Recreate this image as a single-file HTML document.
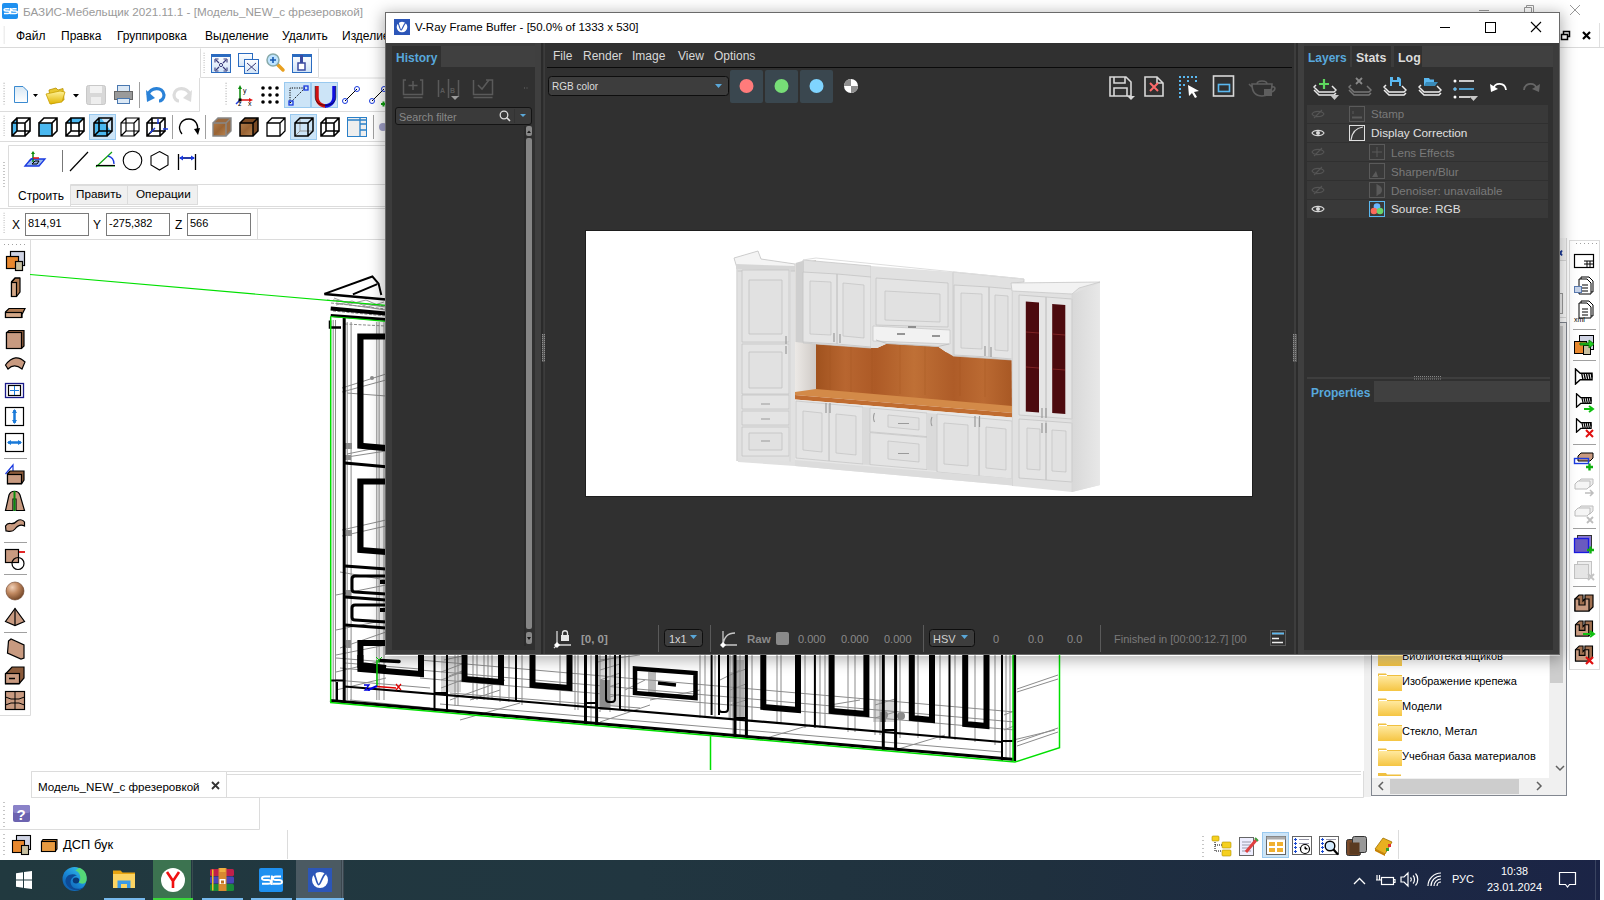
<!DOCTYPE html>
<html><head><meta charset="utf-8">
<style>
*{margin:0;padding:0;box-sizing:border-box}
html,body{width:1604px;height:900px;overflow:hidden;background:#fff;font-family:"Liberation Sans",sans-serif;font-size:12px;color:#000;position:relative}
.a{position:absolute}
.t{position:absolute;white-space:nowrap;line-height:1}
svg{position:absolute;overflow:visible}
</style></head><body>
<!-- ============ BASIS background app ============ -->
<svg width="1604" height="900" style="left:0;top:0" viewBox="0 0 1604 900">
<defs>
  <linearGradient id="gdoc" x1="0" y1="0" x2="0" y2="1"><stop offset="0" stop-color="#d8e8f4"/><stop offset="1" stop-color="#ffffff"/></linearGradient>
  <linearGradient id="gfold" x1="0" y1="0" x2="0" y2="1"><stop offset="0" stop-color="#fff39a"/><stop offset="1" stop-color="#e0b400"/></linearGradient>
  <linearGradient id="gwin" x1="0" y1="0" x2="0" y2="1"><stop offset="0" stop-color="#ffffff"/><stop offset="1" stop-color="#cfe3f7"/></linearGradient>
  <radialGradient id="gsph" cx="0.35" cy="0.3" r="0.7"><stop offset="0" stop-color="#f0d0b8"/><stop offset="0.5" stop-color="#c08860"/><stop offset="1" stop-color="#7a4c2c"/></radialGradient>
  <linearGradient id="gwood" x1="0" y1="0" x2="1" y2="1"><stop offset="0" stop-color="#b07a48"/><stop offset="0.5" stop-color="#9a6434"/><stop offset="1" stop-color="#b98450"/></linearGradient>
  <symbol id="cube" viewBox="0 0 20 20"><path d="M1 6H14V19H1Z M6 1H19V14H6Z M1 6L6 1 M14 6L19 1 M1 19L6 14 M14 19L19 14" fill="none" stroke="#000" stroke-width="1.6"/></symbol>
  <symbol id="grip" viewBox="0 0 3 30"><path d="M1 1v1M1 4v1M1 7v1M1 10v1M1 13v1M1 16v1M1 19v1M1 22v1M1 25v1" stroke="#a0a0a0" stroke-width="1.2"/></symbol>
</defs>
<!-- title icon -->
<rect x="2" y="3" width="16" height="16" rx="2" fill="#1e90f0"/>
<g transform="translate(2,3) scale(0.6667) translate(-259,-868)"><path d="M270 876.5H265Q262 876.5 262 878.2Q262 880 265 880H268Q271 880 271 882Q271 883.8 268 883.8H262 M281 876.5H276Q273 876.5 273 878.2Q273 880 276 880H279Q282 880 282 882Q282 883.8 279 883.8H273 M271.8 875.5V885" stroke="#fff" stroke-width="2.2" fill="none"/></g>
<!-- background window controls (inactive) -->
<path d="M1479 10.5H1489" stroke="#999" stroke-width="1"/>
<path d="M1524.5 7.5h7v7h-7z M1526.5 7.5v-2h7v7h-2" stroke="#999" stroke-width="1" fill="none"/>
<path d="M1570 5L1580 15M1580 5L1570 15" stroke="#999" stroke-width="1"/>
<!-- MDI child controls -->
<path d="M1558 47.5H1599.5V23" fill="#fff" stroke="#e0e0e0"/>
<path d="M1561.5 34.5h6v5h-6z M1563.5 34.5v-3h6v5h-2" stroke="#000" stroke-width="1.5" fill="none"/>
<path d="M1583 32L1590 39M1590 32L1583 39" stroke="#000" stroke-width="2.2"/>
<path d="M0 47.5H1604" stroke="#dadada"/>
<!-- menu grip -->
<use href="#grip" x="3" y="26" width="3" height="20"/>

<!-- toolbar row1 -->
<path d="M200.5 48.5V77.5H318.5V48.5" fill="none" stroke="#dcdcdc"/>
<use href="#grip" x="203" y="52" width="3" height="24"/>
<g transform="translate(211,54)"><rect x="0.5" y="0.5" width="19" height="18" fill="url(#gwin)" stroke="#2a6bc0"/><rect x="0.5" y="0.5" width="19" height="2.5" fill="#2a6bc0"/><path d="M5 6L8 9M15 6L12 9M5 16L8 13M15 16L12 13" stroke="#3a3a7a" stroke-width="1.2"/><path d="M4 5h3.5M4 5v3.5M16 5h-3.5M16 5v3.5M4 17h3.5M4 17v-3.5M16 17h-3.5M16 17v-3.5" stroke="#3a3a7a" stroke-width="1.1"/><circle cx="10" cy="11" r="1.6" fill="none" stroke="#3a3a7a"/></g>
<g transform="translate(238,53)"><rect x="0.5" y="0.5" width="14" height="13" fill="url(#gwin)" stroke="#2a6bc0"/><rect x="6.5" y="6.5" width="14" height="14" fill="url(#gwin)" stroke="#2a6bc0"/><path d="M9 10L18 18M18 10L9 18" stroke="#3a3a7a"/></g>
<g transform="translate(266,53)"><path d="M11 11L17 17" stroke="#e8a020" stroke-width="3.5" stroke-linecap="round"/><circle cx="7" cy="7" r="6" fill="#bfe4ff" stroke="#8aa" stroke-width="1.5"/><path d="M7 4v6M4 7h6" stroke="#1a5ab0" stroke-width="1.6"/></g>
<g transform="translate(292,54)"><rect x="0.5" y="0.5" width="19" height="18" fill="url(#gwin)" stroke="#2a6bc0"/><rect x="0.5" y="0.5" width="19" height="2.5" fill="#2a6bc0"/><rect x="8" y="1" width="3" height="8" fill="#3a4aa0"/><rect x="6" y="9" width="7" height="7" fill="#fff" stroke="#3a4aa0" stroke-width="1.5"/></g>

<!-- toolbar row2 left -->
<path d="M0 111.5H199.5V78" fill="none" stroke="#dcdcdc"/>
<use href="#grip" x="3" y="82" width="3" height="26"/>
<path d="M14.5 86.5H23L27.5 91V102.5H14.5Z" fill="url(#gdoc)" stroke="#3a8ad0"/>
<path d="M33 94h5l-2.5 3z M73 94h6l-3 3.5z" fill="#000"/>
<path d="M49 90L56 88L58 90L63 88.5L64 100L51 104Z" fill="#e8c830" stroke="#b89000" stroke-width="0.8"/><path d="M46 94L60 91L65 92L62 102L50 104Z" fill="url(#gfold)" stroke="#c8a000" stroke-width="0.8"/>
<rect x="86.5" y="85.5" width="19" height="19" rx="2" fill="#d8d8d8" stroke="#c8c8c8"/><rect x="90" y="86" width="12" height="7" fill="#f2f2f2"/><rect x="91" y="97" width="10" height="7" fill="#eee"/>
<rect x="117.5" y="85.5" width="12" height="6" fill="#dbe8f5" stroke="#4a78b0"/><rect x="114.5" y="91.5" width="18" height="8" fill="#9a9a9a" stroke="#666"/><rect x="117.5" y="98.5" width="12" height="5" fill="#dbe8f5" stroke="#4a78b0"/>
<path d="M139.5 82V108" stroke="#a0a0a0"/>
<path d="M148 95 C150 87 163 86 164 95 C164 99 161 101 159 101" fill="none" stroke="#2a82d8" stroke-width="3.2"/><path d="M146 90L147 102L155 98Z" fill="#2a82d8"/>
<path d="M190 95 C188 87 175 86 174 95 C174 99 177 101 179 101" fill="none" stroke="#dcdcdc" stroke-width="3.2"/><path d="M192 90L191 102L183 98Z" fill="#dcdcdc"/>

<!-- toolbar row2 right -->
<path d="M222 111.5H386 M318.5 78H386" fill="none" stroke="#dcdcdc"/>
<use href="#grip" x="225" y="82" width="3" height="26"/>
<g transform="translate(235,85)"><path d="M5 15V2M5 15H16M5 15L1 19" stroke="#000" stroke-width="0"/><path d="M5 15V3" stroke="#0a8a0a" stroke-width="1.5"/><path d="M3 4L5 0L7 4Z" fill="#0a8a0a"/><path d="M5 15H15" stroke="#e01010" stroke-width="1.5"/><path d="M14 13L18 15L14 17Z" fill="#e01010"/><path d="M5 15L1 19" stroke="#1a3ae0" stroke-width="1.5"/><rect x="3.5" y="13.5" width="3" height="3" fill="#000"/><text x="8" y="8" font-size="7" font-family="Liberation Sans">y</text><text x="13" y="21" font-size="7" font-family="Liberation Sans">x</text><text x="3" y="21" font-size="7" font-family="Liberation Sans">z</text></g>
<g fill="#000"><circle cx="263" cy="88" r="1.8"/><circle cx="270" cy="88" r="1.8"/><circle cx="277" cy="88" r="1.8"/><circle cx="263" cy="95" r="1.8"/><circle cx="270" cy="95" r="1.8"/><circle cx="277" cy="95" r="1.8"/><circle cx="263" cy="102" r="1.8"/><circle cx="270" cy="102" r="1.8"/><circle cx="277" cy="102" r="1.8"/></g>
<rect x="284.5" y="82.5" width="26" height="25" fill="#cce4f7" stroke="#99c9ef"/>
<rect x="311.5" y="82.5" width="26" height="25" fill="#cce4f7" stroke="#99c9ef"/>
<path d="M290 103V88H305 M290 103L305 88" stroke="#000" stroke-width="1" stroke-dasharray="1.2 1.2" fill="none"/><rect x="289" y="101" width="4" height="4" fill="none" stroke="#1a3ae0" stroke-width="1.3"/><rect x="304" y="86" width="4" height="4" fill="none" stroke="#1a3ae0" stroke-width="1.3"/>
<path d="M317 86V97 C317 106 326 106 326 106" stroke="#d01010" stroke-width="3.5" fill="none"/><path d="M334 86V97 C334 106 325 106 325 106" stroke="#1010e0" stroke-width="3.5" fill="none"/><path d="M315.2 86V97 C315.2 108 335.8 108 335.8 97V86" stroke="#000" stroke-width="0.6" fill="none"/>
<path d="M345 101L357 89" stroke="#000"/><circle cx="345" cy="101" r="2.5" fill="none" stroke="#1a3ae0"/><circle cx="357" cy="89" r="2.5" fill="none" stroke="#1a3ae0"/>
<path d="M372 101L384 89" stroke="#000"/><circle cx="372" cy="101" r="2.5" fill="none" stroke="#1a3ae0"/><circle cx="384" cy="89" r="2.5" fill="none" stroke="#1a3ae0"/><path d="M381 104h5M383.5 101.5v5" stroke="#10a010" stroke-width="2"/>

<!-- toolbar row3 -->
<path d="M0 141.5H386" stroke="#dcdcdc"/>
<use href="#grip" x="3" y="115" width="3" height="24"/>
<g transform="translate(11,117)"><path d="M1 6L6 1V14L1 19Z" fill="#4ab8f0"/><use href="#cube" width="20" height="20"/></g>
<g transform="translate(38,117)"><path d="M1 6L6 1H19V14L14 19 M14 6L19 1" fill="#fff" stroke="#000" stroke-width="1.6"/><path d="M1 6H14V19H1Z" fill="#4ab8f0" stroke="#000" stroke-width="1.6"/></g>
<g transform="translate(65,117)"><path d="M1 6L6 1H19L14 6Z" fill="#4ab8f0"/><use href="#cube" width="20" height="20"/></g>
<rect x="89.5" y="114.5" width="26" height="25" fill="#cce4f7" stroke="#99c9ef"/>
<g transform="translate(93,117)"><path d="M2 6L8 1L18 14L14 19H2Z" fill="#4ab8f0"/><use href="#cube" width="20" height="20"/></g>
<g transform="translate(120,117)"><path d="M1 6H14V19H1Z M6 1H19V14H6Z M1 6L6 1 M14 6L19 1 M1 19L6 14 M14 19L19 14" fill="none" stroke="#000" stroke-width="1.2"/></g>
<g transform="translate(146,117)"><use href="#cube" width="20" height="20"/><path d="M4 16L9 11" stroke="#1a3ae0" stroke-width="1.5"/><path d="M12 2V7M17 12H22" stroke="#1a3ae0" stroke-width="1.5"/></g>
<path d="M172.5 115V139 M205.5 115V139 M373.5 115V139" stroke="#a0a0a0"/>
<path d="M182 134 C177 128 180 119 189 119 C196 119 199 126 197 131" fill="none" stroke="#000" stroke-width="1.3"/><path d="M194 129L198 135L200 128Z" fill="#000"/>
<g transform="translate(212,117)"><path d="M1 6H14V19H1Z" fill="url(#gwood)"/><path d="M1 6L6 1H19L14 6Z M14 6L19 1V14L14 19Z" fill="#9a6a40"/><path d="M1 6H14V19H1Z M1 6L6 1H19V14L14 19 M14 6L19 1" fill="none" stroke="#888" stroke-width="1.4"/></g>
<g transform="translate(239,117)"><path d="M1 6H14V19H1Z" fill="url(#gwood)"/><path d="M1 6L6 1H19L14 6Z M14 6L19 1V14L14 19Z" fill="#7a4a24"/><path d="M1 6H14V19H1Z M1 6L6 1H19V14L14 19 M14 6L19 1" fill="none" stroke="#000" stroke-width="1.5"/></g>
<g transform="translate(266,117)"><path d="M1 6H14V19H1Z M1 6L6 1H19V14L14 19 M14 6L19 1" fill="#fff" stroke="#000" stroke-width="1.3"/></g>
<rect x="290.5" y="114.5" width="26" height="25" fill="#cce4f7" stroke="#99c9ef"/>
<g transform="translate(294,117)"><path d="M6 1V14H19 M6 14L1 19" stroke="#999" fill="none"/><path d="M1 6H14V19H1Z M1 6L6 1H19V14L14 19 M14 6L19 1" fill="none" stroke="#000" stroke-width="1.5"/></g>
<g transform="translate(320,117)"><use href="#cube" width="20" height="20"/></g>
<g transform="translate(347,117)"><rect x="0.5" y="0.5" width="19" height="19" fill="#eee" stroke="#2a80c8"/><path d="M13 1V19 M13 7H19 M13 13H19 M1 3H19" stroke="#2a80c8" stroke-width="1.3"/></g>
<circle cx="383" cy="127" r="4" fill="#a0a0c8"/>

<!-- build panel -->
<path d="M8.5 207V145.5H386" fill="none" stroke="#dcdcdc"/>
<use href="#grip" x="3" y="146" width="3" height="60"/>
<g transform="translate(25,151)"><path d="M0 15L6 8H20L14 15Z" fill="#9ab8f0" stroke="#1a3ae0" stroke-width="1.3"/><path d="M7 13L10 10H14L12 13Z" stroke="#000" fill="none"/><path d="M8 11V2" stroke="#0a8a0a" stroke-width="1.5"/><path d="M6 3L8 0L10 3Z" fill="#0a8a0a"/><path d="M8 7H14" stroke="#e01010" stroke-width="1.5"/><path d="M8 7L4 10" stroke="#1a3ae0" stroke-width="1.5"/></g>
<path d="M62.5 150V172" stroke="#777"/>
<path d="M70 171L88 152" stroke="#000" stroke-width="1.2"/>
<path d="M96 166H115 M96 167L112 152" stroke="#10a010" stroke-width="1.2"/><path d="M96 165.5H115" stroke="#000" stroke-width="1.2"/><path d="M108 156 C112 157 114 160 114 164" stroke="#1a3ae0" fill="none" stroke-width="1.3"/>
<circle cx="132.5" cy="160.5" r="9.3" fill="none" stroke="#000" stroke-width="1.1"/>
<path d="M159.5 151.5L168 156V165L159.5 170L151 165V156Z" fill="none" stroke="#000" stroke-width="1.1"/>
<path d="M178.5 154V170M195.5 154V170M180 158H194" stroke="#000" stroke-width="1.3"/><path d="M180 158H194" stroke="#1a3ae0" stroke-width="1.3"/><path d="M179 158L183 155.5V160.5Z M195 158L191 155.5V160.5Z" fill="#1a3ae0"/>
<!-- tabs -->
<path d="M70.5 206V184.5H386" fill="none" stroke="#dcdcdc"/>
<rect x="70.5" y="185.5" width="57" height="19" fill="#f0f0f0" stroke="#dcdcdc"/>
<rect x="127.5" y="185.5" width="70" height="19" fill="#f0f0f0" stroke="#dcdcdc"/>
<path d="M8 206.5H70 M70 206.5H386" stroke="#dcdcdc"/>

<!-- coordinates -->
<path d="M0 208.5H386 M0 239.5H386 M257.5 208V239" stroke="#dcdcdc"/>
<use href="#grip" x="3" y="212" width="3" height="24"/>
<rect x="25.5" y="213.5" width="63" height="22" fill="#fff" stroke="#7a7a7a"/>
<rect x="106.5" y="213.5" width="63" height="22" fill="#fff" stroke="#7a7a7a"/>
<rect x="187.5" y="213.5" width="63" height="22" fill="#fff" stroke="#7a7a7a"/>

<!-- left vertical toolbar -->
<path d="M30.5 240V715.5H0" fill="none" stroke="#dcdcdc"/>
<path d="M4 244.5h1M8 244.5h1M12 244.5h1M16 244.5h1M20 244.5h1M24 244.5h1" stroke="#a0a0a0" stroke-width="1.2"/>
<g stroke="#000" stroke-width="1.2">
 <rect x="10.5" y="251.5" width="14" height="14" fill="#d0d4e4"/>
 <rect x="6.5" y="256.5" width="12" height="12" fill="#e8882e"/>
 <rect x="15.5" y="261.5" width="7" height="9" fill="#c8c0a0"/>
 <path d="M11.5 282L15 278H20V292L16.5 296.5H11.5Z" fill="#b07a52"/><rect x="11.5" y="282.5" width="5" height="14" fill="#d4a888"/><path d="M11.5 282L15 278H20" fill="none"/>
 <path d="M5.5 312L9 308.5H25L22 314.5V317.5H5.5Z" fill="#b07a52"/><rect x="5.5" y="312.5" width="16" height="5" fill="#d4a888"/>
 <path d="M6.5 333L9 330.5H24V346L21.5 348.5H6.5Z" fill="#8a5a3a"/><rect x="6.5" y="332.5" width="15" height="16" fill="#c89a80"/>
 <path d="M5.5 365 C12 356 19 356 25 362 L22 369 C17 365 12 365 8 369Z" fill="#c89a80"/>
 <rect x="5.5" y="383.5" width="18" height="14" fill="#fff" stroke="#1a1a8a" stroke-width="1.3"/><rect x="8.5" y="385.5" width="12" height="10" fill="#fff"/>
 <rect x="5.5" y="407.5" width="18" height="18" fill="#fff"/>
 <rect x="5.5" y="433.5" width="18" height="18" fill="#fff"/>
</g>
<path d="M10 390.5H19M14.5 386V395" stroke="#1a7ad8" stroke-width="1"/>
<path d="M14.5 410V423" stroke="#1a7ad8" stroke-width="2.5"/><path d="M12 413L14.5 409L17 413ZM12 420L14.5 424L17 420Z" fill="#1a7ad8"/>
<path d="M8 442.5H21" stroke="#1a7ad8" stroke-width="2.5"/><path d="M11 440L7 442.5L11 445ZM18 440L22 442.5L18 445Z" fill="#1a7ad8"/>
<path d="M4 458.5H27M4 542.5H27M4 574.5H27M4 632.5H27" stroke="#a0a0a0"/>
<g stroke="#000" stroke-width="1.2">
 <path d="M5.5 474L13 465V480" fill="none" stroke="#1a3ae0"/>
 <path d="M7.5 474L10 471H24V480L21.5 484H7.5Z" fill="#8a5a3a"/><rect x="7.5" y="474.5" width="14" height="9" fill="#c89a80"/>
 <path d="M5.5 510.5L9 495 C11 490 18 490 20 495 L24.5 510.5H16V499H13V510.5Z" fill="#c89a80"/>
 <path d="M5.5 526 C9 520 12 527 17 521 C20 519 23 520 24.5 522V526 C21 524 18 525 15 529 C12 533 8 531 6 531Z" fill="#c89a80"/>
 <rect x="5.5" y="549.5" width="13" height="13" fill="#c89a80"/>
 <circle cx="18" cy="563.5" r="6" fill="none"/>
</g>
<path d="M14.5 491V511" stroke="#0a8a0a" stroke-width="2"/>
<path d="M19 552h6" stroke="#e01010" stroke-width="1.8"/>
<circle cx="15" cy="591" r="9" fill="url(#gsph)" stroke="#6a4028" stroke-width="0.6"/>
<g stroke="#000" stroke-width="1.2">
 <path d="M15 608.5L5.5 621.5L15 625.5L24.5 621.5Z" fill="#c89a80"/><path d="M15 608.5V625.5" fill="none"/>
 <path d="M8.5 641L11 639L24 645V658L21 659L7.5 653Z" fill="#c89a80"/>
 <path d="M5.5 674L12 667H24V678L19 684H5.5Z" fill="#8a5a3a"/><rect x="5.5" y="673.5" width="14" height="10" fill="#c89a80"/><path d="M9 678.5H15" stroke-width="1.5"/>
 <rect x="5.5" y="691.5" width="19" height="18" fill="#c89a80"/><path d="M15 691.5V709.5M5.5 697L11 699H19L24.5 697M5.5 705L11 703H19L24.5 705" fill="none" stroke-width="1"/>
</g>
</svg>
<div class="t" style="left:23px;top:6px;font-size:11.7px;color:#9a9a9a">БАЗИС-Мебельщик 2021.11.1 - [Модель_NEW_с фрезеровкой]</div>
<div class="t" style="left:16px;top:30px;font-size:12px">Файл</div>
<div class="t" style="left:61px;top:30px;font-size:12px">Правка</div>
<div class="t" style="left:117px;top:30px;font-size:12px">Группировка</div>
<div class="t" style="left:205px;top:30px;font-size:12px">Выделение</div>
<div class="t" style="left:282px;top:30px;font-size:12px">Удалить</div>
<div class="t" style="left:342px;top:30px;font-size:12px">Изделие</div>
<div class="t" style="left:18px;top:190px;font-size:12px">Строить</div>
<div class="t" style="left:76px;top:188px;font-size:11.7px">Править</div>
<div class="t" style="left:136px;top:188px;font-size:11.7px">Операции</div>
<div class="t" style="left:12px;top:219px;font-size:12px">X</div>
<div class="t" style="left:93px;top:219px;font-size:12px">Y</div>
<div class="t" style="left:175px;top:219px;font-size:12px">Z</div>
<div class="t" style="left:28px;top:218px;font-size:11px">814,91</div>
<div class="t" style="left:109px;top:218px;font-size:11px">-275,382</div>
<div class="t" style="left:190px;top:218px;font-size:11px">566</div>

<svg width="1604" height="900" style="left:0;top:0" viewBox="0 0 1604 900">
<g fill="none" stroke-linecap="butt">
<!-- gray construction lines (left column) -->
<g stroke="#8c8c8c" stroke-width="1">
 <path d="M333.2 320V702 M335.5 320V702 M347.2 322V700 M351.1 322V700 M376.8 322V700 M379.1 322V700 M384 322V700"/>
 <path d="M333 300L386 307 M336 303L386 310 M342 388L386 374 M342 392L386 380 M347 393L386 396 M347 454L386 446 M347 457L386 451 M342 530L386 520 M342 536L386 526 M336 595L386 585 M340 572L386 580 M336 630L386 620 M340 648L386 632 M336 655L386 645 M336 672L386 660 M336 690L386 678"/>
 <path d="M327 300L386 306 M331 303L386 309 M333 311L386 316 M345 324L386 326" stroke-dasharray="3 1.5"/><path d="M334 298L350 304L366 300L380 306 M336 305L352 301L368 307L384 302" stroke="#9a9a9a"/>
</g>
<g fill="#8c8c8c"><rect x="345" y="443" width="7" height="6"/><rect x="345" y="455" width="6" height="5"/><rect x="346" y="530" width="6" height="6"/><rect x="346" y="590" width="5" height="6"/><rect x="346" y="640" width="5" height="8"/><circle cx="372" cy="378" r="2"/></g>
<!-- gray construction lines (lower strip) -->
<g stroke="#8c8c8c" stroke-width="1">
 <path d="M336 658L386 662 M420 660L1015 712 M420 670L1015 722 M420 678L1015 730 M440 704L1002 752 M345 663L420 669"/>
 <path d="M340 668L420 675 M336 680L430 688 M350 700L430 708"/>
 <path d="M455 655V706 M458 655V706 M473 655V700 M477 655V700 M484 655V700 M488 655V700 M492 655V700 M500 655V702 M509 655V702 M522 655V705 M560 655V705 M575 655V710 M578 655V710 M591 655V725 M600 655V712 M610 655V712 M625 655V712 M629 655V712 M700 655V718 M705 655V718 M715 655V718 M730 655V720 M733 655V736 M740 655V736 M752 655V722 M777 655V724 M781 655V724 M805 655V728 M820 655V728 M825 655V728 M848 655V732 M855 655V732 M875 655V735 M880 655V735 M900 655V738 M918 655V738 M940 655V740 M955 655V740 M975 655V742 M995 655V745 M1006 655V760 M1010 655V760"/>
 <path d="M460 720L520 703 M600 722L650 705 M650 700L700 690 M760 740L810 725 M895 750L945 735 M1005 742L1055 730"/>
 <path d="M1017 689L1058 675 M1017 692L1058 679 M1017 742L1058 728 M1017 746L1058 732"/>
 <path d="M600 660L640 655 M625 690L645 680 M720 680L740 670 M830 705L860 700"/>
</g>
<g fill="#8c8c8c"><rect x="600" y="680" width="10" height="30"/><rect x="648" y="672" width="8" height="22" opacity="0.6"/><rect x="880" y="712" width="6" height="10"/><circle cx="884" cy="715" r="4"/><circle cx="901" cy="716" r="4"/><rect x="736" y="660" width="8" height="60" opacity="0.5"/><rect x="727" y="672" width="6" height="30" opacity="0.5"/></g>
<g stroke="#8c8c8c" stroke-width="1" fill="none">
 <path d="M441 672L462 664 M441 680L462 672 M441 688L462 680 M449 676L462 671 M444 660L462 656 M450 700L505 680 M470 700L500 690 M600 670L620 664 M600 680L620 673 M600 690L620 683 M600 700L620 694 M598 662L620 656 M450 693L584 703.6 M600 705L640 708 M730 705L746 700 M730 690L746 684 M730 675L746 669 M875 705L895 699 M875 718L895 712 M1004 730L1014 726 M1004 715L1014 711"/>
</g>
<g fill="#8c8c8c" opacity="0.35"><rect x="441" y="656" width="20" height="36"/><rect x="598" y="656" width="22" height="50"/><rect x="728" y="656" width="18" height="62"/><rect x="873" y="700" width="22" height="22"/></g>
<!-- black outlines -->
<g stroke="#000">
 <path d="M324.4 293.9L372.4 276.5L378.6 283.6L381.3 295 M352.9 294.3L377.3 284.1" stroke-width="2"/>
 <path d="M324.4 293.9L386 299.5" stroke-width="2.5"/>
 <path d="M330.7 308.5L386 313.4" stroke-width="4"/>
 <path d="M330.7 315.6L386 319.4" stroke-width="3"/>
 <path d="M330 320.5V327.5H341" stroke-width="2.5"/>
 <path d="M344.2 318V702" stroke-width="3"/>
 <path d="M386 336.5H360.4V445.8L386 448.2" stroke-width="6.2"/>
 <path d="M386 481.5H360.4V550L386 552" stroke-width="6.2"/>
 <path d="M345 463L386 466.7" stroke-width="3"/>
 <path d="M345 566L386 569 M345 597L386 600 M345 625L386 628" stroke-width="3"/>
 <path d="M386 576H355Q352 576 352 579V589Q352 592 355 592L386 594 M386 605H355Q352 605 352 608V617Q352 620 355 620L386 622" stroke-width="3"/><path d="M380 582h6M380 610h6" stroke-width="4"/>
 <path d="M386 643H360.4V665L386 668" stroke-width="6"/>
 <path d="M331 680.5H344 M337 682V702" stroke-width="2"/>
 <!-- lower strip -->
 <path d="M330 700.5L1015 759.5" stroke-width="3"/>
 <path d="M345 686.5L1002 742" stroke-width="2.2"/>
 <path d="M421 655V674L360.4 669V655" stroke-width="6"/>
 <path d="M380 660.5L399 661.5" stroke-width="3.5" stroke-linecap="round"/>
 <path d="M434.5 655V710 M447 655V712 M516 655V700 M620 655V710 M711.6 655V715 M719 655V715 M814.9 655V727.4 M949.5 655V737.5 M1002 655V761" stroke-width="2"/>
 <path d="M585.5 655V725 M596.6 655V725 M735 655V736.4 M746.4 655V736.4 M883.3 655V750 M895.6 655V750 M1014.6 655V761" stroke-width="3"/>
 <path d="M434.5 693H447 M585.5 703H596.6 M735 718H746.4 M883.3 730H895.6 M1002 741H1015" stroke-width="2"/>
 <path d="M464.5 655V679L501 682V655 M532.5 655V685L569.5 688V655 M763.3 655V707L798 710V655 M831.6 655V711L866.4 714V655 M911.8 655V718L932 720V655 M965.2 655V724L986.5 726V655" stroke-width="6"/>
 <path d="M606 655V699Q606 702 609 702H612Q615 702 615 699V655 M719 655V709Q719 712 722 712H725Q728 712 728 709V655" stroke-width="2"/>
 <path d="M635 668.5L695.5 673V698L635 693Z" stroke-width="4.5"/>
 <path d="M658 683L676 685" stroke-width="3.5"/>
</g>
<!-- green -->
<g stroke="#00e000" stroke-width="1.5">
 <path d="M330.7 316.5V702 M330 702.5L1015 762L1059.5 747.6V655 M710.5 736V770 M1013 655V761"/>
 <path d="M30 274.5L386 305.4 M330.7 316.5L386 321.4" stroke-width="1.1"/>
</g>
<!-- axis icon -->
<path d="M377 660V687" stroke="#00c800" stroke-width="1.5"/>
<path d="M377 686.5L396 688" stroke="#e00000" stroke-width="1.5"/>
<path d="M377 686L368 690" stroke="#0000e0" stroke-width="2"/>
<path d="M396 684L401 690M401 684L396 690" stroke="#e00000" stroke-width="1.2"/>
<path d="M364 685H369L365 690H370" stroke="#0000e0" stroke-width="1.3"/>
<path d="M376 657L379 660L382 657M379 660V663" stroke="#00c800" stroke-width="1"/>
</g>
</svg>

<svg width="1604" height="900" style="left:0;top:0" viewBox="0 0 1604 900">
<defs>
  <linearGradient id="gfold2" x1="0" y1="0" x2="0" y2="1"><stop offset="0" stop-color="#ffe9a0"/><stop offset="1" stop-color="#f5c542"/></linearGradient>
  <symbol id="fold" viewBox="0 0 24 19"><path d="M0 1.5H8L9 3H24V19H0Z" fill="#f0c040"/><path d="M0 4H24V19H0Z" fill="url(#gfold2)"/><path d="M1 3.5H9" stroke="#fff" stroke-width="1"/></symbol>
  <symbol id="screw" viewBox="0 0 20 18"><path d="M1 1L6 5.5H18.5V12.5H6L1 17Z" fill="#fff" stroke="#000" stroke-width="1.5"/><path d="M7.5 5.5L9 12.5M10 5.5L11.5 12.5M12.5 5.5L14 12.5M15 5.5L16.5 12.5M17.5 5.5L18.5 10" stroke="#000" stroke-width="1.5"/></symbol>
  <symbol id="ubrown" viewBox="0 0 20 18"><path d="M1 5L5 1H9V7L11 5V1H15L19 1V13L15 17H1Z" fill="#a07050" stroke="#000" stroke-width="1.2"/><path d="M1 5H5V11H11V5H15V17H1Z" fill="#c89a80" stroke="#000" stroke-width="1.2"/></symbol>
</defs>
<!-- viewport green line -->

<!-- tab bar -->
<path d="M31 771.5H1361 M226 774.5H1361 M31 797.5H1363.5 M1363.5 771V797.5" stroke="#dcdcdc" fill="none"/><rect x="1364" y="655" width="7" height="142" fill="#f0f0f0"/>
<path d="M31.5 797V771.5H226.5V797" fill="#fff" stroke="#dcdcdc"/>
<path d="M212 782L219 789M219 782L212 789" stroke="#333" stroke-width="1.8"/>
<!-- command bar -->
<path d="M0 829.5H259.5V798" fill="none" stroke="#dcdcdc"/>

<path d="M4 802v1M4 806v1M4 810v1M4 814v1M4 818v1M4 822v1M4 826v1M4 834v1M4 838v1M4 842v1M4 846v1M4 850v1M4 854v1" stroke="#a0a0a0" stroke-width="1.2"/>
<rect x="13" y="805" width="17" height="17" rx="2" fill="#6c63b0"/><rect x="13" y="805" width="17" height="8" rx="2" fill="#8a82c8"/>
<text x="16.5" y="820" font-size="15" font-weight="bold" fill="#fff" font-family="Liberation Sans">?</text>
<!-- status bar -->
<path d="M287.5 830V859" stroke="#dcdcdc"/>
<g stroke="#000" stroke-width="1.1">
 <rect x="16.5" y="835.5" width="14" height="14" fill="#d0d4e4"/>
 <rect x="12.5" y="840.5" width="12" height="12" fill="#e8882e"/>
 <rect x="21.5" y="845.5" width="7" height="9" fill="#c8c0a0"/>
 <path d="M41.5 841.5L43 839.5H57V849L55 851.5H41.5Z" fill="#b06a20"/><rect x="41.5" y="841.5" width="14" height="10" fill="#e89a40"/>
</g>
<!-- status right icons -->
<path d="M1203 836v1M1203 840v1M1203 844v1M1203 848v1M1203 852v1M1203 856v1" stroke="#a0a0a0" stroke-width="1.2"/>
<path d="M1398.5 830V859" stroke="#dcdcdc"/>
<g transform="translate(1212,835)"><path d="M3 5V16H10M3 10H10" stroke="#000" stroke-dasharray="1 1" fill="none"/><rect x="0" y="1" width="7" height="5" rx="1" fill="#f5d020" stroke="#b09000" stroke-width="0.6"/><rect x="10" y="7" width="9" height="6" rx="1" fill="#f5d020" stroke="#b09000" stroke-width="0.6"/><rect x="10" y="15" width="9" height="6" rx="1" fill="#f5d020" stroke="#b09000" stroke-width="0.6"/></g>
<g transform="translate(1239,835)"><rect x="0.5" y="2.5" width="14" height="18" fill="#eef" stroke="#666"/><path d="M3 7H12M3 10H12M3 13H12M3 16H12" stroke="#99a"/><path d="M7 17L18 4" stroke="#e04040" stroke-width="3"/><path d="M16 3L19 6" stroke="#40a040" stroke-width="2"/></g>
<rect x="1262.5" y="832.5" width="26" height="25" fill="#cce4f7" stroke="#99c9ef"/>
<g transform="translate(1266,836)"><rect x="0.5" y="0.5" width="19" height="18" fill="#fff" stroke="#666"/><rect x="0.5" y="0.5" width="19" height="3" fill="#aaa"/><rect x="3" y="6" width="6" height="4" fill="#f0b030"/><rect x="11" y="6" width="6" height="4" fill="#f0b030"/><rect x="3" y="12" width="6" height="4" fill="#f0b030"/><rect x="11" y="12" width="6" height="4" fill="#f0b030"/></g>
<g transform="translate(1292,836)"><rect x="0.5" y="0.5" width="19" height="18" fill="#fff" stroke="#666"/><path d="M2 3.5h3M3.5 2v3M2 7.5h3M3.5 6v3M2 11.5h3M3.5 10v3M2 15.5h3M3.5 14v3" stroke="#1a4ad0"/><path d="M7 3.5H17M7 7.5H17M7 11.5H9" stroke="#99a"/><circle cx="13" cy="13" r="4.5" fill="#fff" stroke="#000" stroke-width="1.2"/><path d="M13 10.5V13H15.5" stroke="#000"/></g>
<g transform="translate(1319,836)"><rect x="0.5" y="0.5" width="19" height="18" fill="#fff" stroke="#666"/><path d="M2 3.5h3M3.5 2v3M2 7.5h3M3.5 6v3M2 11.5h3M3.5 10v3M2 15.5h3M3.5 14v3" stroke="#1a4ad0"/><path d="M7 3.5H17" stroke="#99a"/><circle cx="11" cy="10" r="4.8" fill="#d4ecff" stroke="#000" stroke-width="1.4"/><path d="M14.5 13.5L19 18.5" stroke="#000" stroke-width="2.2"/></g>
<g transform="translate(1346,836)"><rect x="0.5" y="3.5" width="14" height="16" rx="2" fill="#7a4a2a" stroke="#333"/><rect x="6.5" y="0.5" width="14" height="16" rx="2" fill="#999" stroke="#333"/><rect x="3.5" y="6.5" width="10" height="12" fill="#5a3a20"/></g>
<g transform="translate(1373,836)"><path d="M2 13L10 2L19 6L12 18Z" fill="#e8b020" stroke="#a07000" stroke-width="0.8"/><path d="M2 13L12 18L12 20L2 15Z" fill="#c88000"/><rect x="15" y="8" width="3" height="3" fill="#e03030"/><rect x="13" y="12" width="3" height="3" fill="#30a030"/></g>

<!-- file browser panel -->
<rect x="1360" y="238" width="207" height="22" fill="#f8f8f8"/>
<path d="M1559 250.5L1562 255.5M1562 250.5L1559 255.5" stroke="#1a3a9a" stroke-width="1.6"/>
<path d="M1360 260.5H1567 M1566.5 238V796" stroke="#dcdcdc" fill="none"/>
<rect x="1540.5" y="293.5" width="22" height="20" fill="#f4f4f4" stroke="#a0a0a0"/>
<path d="M1360 317.5H1567" stroke="#dcdcdc"/>
<rect x="1371.5" y="322.5" width="195" height="473" fill="#fff" stroke="#828790"/>
<rect x="1549" y="323" width="17" height="455" fill="#f0f0f0"/>
<rect x="1550" y="326" width="13" height="357" fill="#cdcdcd"/>
<path d="M1556 766L1560 770L1564 766" stroke="#606060" stroke-width="1.5" fill="none"/>
<rect x="1372" y="778" width="194" height="17" fill="#f0f0f0"/>
<rect x="1390" y="779" width="129" height="15" fill="#cdcdcd"/>
<path d="M1383 782L1379 786L1383 790 M1537 782L1541 786L1537 790" stroke="#606060" stroke-width="1.5" fill="none"/>
<use href="#fold" x="1378" y="647" width="24" height="19"/>
<use href="#fold" x="1378" y="672" width="24" height="19"/>
<use href="#fold" x="1378" y="697" width="24" height="19"/>
<use href="#fold" x="1378" y="722" width="24" height="19"/>
<use href="#fold" x="1378" y="747" width="24" height="19"/>
<rect x="1372" y="770" width="176" height="8" fill="#fff"/>
<path d="M1378 773H1386L1387 774.5H1401V776H1378Z" fill="#f0c040"/>
<!-- partially hidden panel left of right toolbar -->

<!-- right vertical toolbar -->
<rect x="1569.5" y="240.5" width="30" height="429" fill="#fff" stroke="#dcdcdc"/>
<path d="M1576 243.5h1M1580 243.5h1M1584 243.5h1M1588 243.5h1M1592 243.5h1M1596 243.5h1" stroke="#a0a0a0" stroke-width="1.2"/>
<path d="M1573 329.5H1596M1573 360.5H1596M1573 444.5H1596M1573 528.5H1596M1573 586.5H1596" stroke="#a0a0a0"/>
<g transform="translate(1574,254)"><rect x="0.5" y="0.5" width="19" height="13" fill="#fff" stroke="#000" stroke-width="1.2"/><path d="M10 7H19M10 10H19M13 7V13M16 7V13" stroke="#000"/></g>
<g transform="translate(1574,276)"><path d="M7 1H15L19 5V16H7Z" fill="#fff" stroke="#000"/><path d="M5 3H13L17 7V18H5Z" fill="#fff" stroke="#000"/><path d="M8 9H14M8 12H14M8 15H14" stroke="#000"/><rect x="0.5" y="10.5" width="7" height="6" fill="#c8d4e8" stroke="#5a7ab0"/></g>
<g transform="translate(1574,300)"><path d="M7 1H15L19 5V16H7Z" fill="#fff" stroke="#000"/><path d="M5 3H13L17 7V18H5Z" fill="#fff" stroke="#000"/><path d="M8 9H14M8 12H14M8 15H14" stroke="#000"/><text x="0" y="22" font-size="7" font-family="Liberation Sans">xml</text></g>
<g transform="translate(1574,335)" stroke="#000" stroke-width="1"><rect x="5.5" y="0.5" width="14" height="14" fill="#d0d4e4"/><rect x="0.5" y="6.5" width="12" height="12" fill="#e8882e"/><rect x="9.5" y="10.5" width="7" height="9" fill="#c8c0a0"/><path d="M6 8H15V5L20 9L15 13V10H6Z" fill="#20d020" stroke="#108010"/></g>
<use href="#screw" x="1574" y="368" width="20" height="17"/>
<use href="#screw" x="1574" y="393" width="20" height="15"/><path d="M1584 409H1592M1589 406L1593 409L1589 412" stroke="#10c010" stroke-width="2" fill="none"/>
<use href="#screw" x="1574" y="418" width="20" height="15"/><path d="M1586 430L1593 437M1593 430L1586 437" stroke="#e01010" stroke-width="2"/>
<g transform="translate(1574,452)"><path d="M4 4L7 1H19V6L16 9H4Z" fill="#c89a80" stroke="#000"/><rect x="0.5" y="6.5" width="14" height="5" fill="none" stroke="#1a3ae0" stroke-width="1.4"/><path d="M12 15H19M15.5 11.5V18.5" stroke="#10b010" stroke-width="2.4"/></g>
<g transform="translate(1574,478)" opacity="0.55"><path d="M4 4L7 1H19V6L16 9H4Z" fill="#ddd" stroke="#888"/><path d="M1 6L4 3H16V8L13 11H1Z" fill="#eee" stroke="#888"/><path d="M11 15H19M16 12L19 15L16 18" stroke="#888" stroke-width="1.5" fill="none"/></g>
<g transform="translate(1574,505)" opacity="0.55"><path d="M4 4L7 1H19V6L16 9H4Z" fill="#ddd" stroke="#888"/><path d="M1 6L4 3H16V8L13 11H1Z" fill="#eee" stroke="#888"/><path d="M13 12L19 18M19 12L13 18" stroke="#888" stroke-width="1.8"/></g>
<g transform="translate(1574,535)"><rect x="3.5" y="0.5" width="14" height="14" fill="#8a7ad0" stroke="#333"/><rect x="0.5" y="3.5" width="14" height="14" fill="#6a5ac0" stroke="#1a1ae0" stroke-width="1.3"/><path d="M13 15H20M16.5 11.5V18.5" stroke="#10b010" stroke-width="2.4"/></g>
<g transform="translate(1574,561)" opacity="0.5"><rect x="3.5" y="0.5" width="14" height="14" fill="#ddd" stroke="#888"/><rect x="0.5" y="3.5" width="14" height="14" fill="#ccc" stroke="#888"/><path d="M14 13L20 19M20 13L14 19" stroke="#888" stroke-width="1.8"/></g>
<use href="#ubrown" x="1574" y="594" width="20" height="18"/>
<use href="#ubrown" x="1574" y="620" width="20" height="17"/><path d="M1583 634H1593M1590 631L1594 634L1590 637" stroke="#10c010" stroke-width="2" fill="none"/>
<use href="#ubrown" x="1574" y="645" width="20" height="17"/><path d="M1586 657L1593 664M1593 657L1586 664" stroke="#e01010" stroke-width="2.2"/>

<!-- taskbar -->
<rect x="0" y="860" width="1600" height="40" fill="url(#gtask)"/>
<defs><linearGradient id="gtask" x1="0" y1="0" x2="1" y2="0"><stop offset="0" stop-color="#21393f"/><stop offset="0.4" stop-color="#213640"/><stop offset="0.65" stop-color="#1f303e"/><stop offset="0.85" stop-color="#1c2943"/><stop offset="1" stop-color="#1b2446"/></linearGradient></defs>
<path d="M1595.5 860V900" stroke="#3a4460"/>
<!-- start -->
<g fill="#fff"><path d="M16 873.3L23 872.3V879.5H16Z"/><path d="M24 872.1L32 871V879.5H24Z"/><path d="M16 880.5H23V887.7L16 886.7Z"/><path d="M24 880.5H32V889L24 887.9Z"/></g>
<!-- edge -->
<defs><linearGradient id="gedge" x1="0" y1="1" x2="0.8" y2="0"><stop offset="0" stop-color="#0b4f9c"/><stop offset="0.55" stop-color="#1a8ad8"/><stop offset="1" stop-color="#35c0e8"/></linearGradient></defs>
<circle cx="74.5" cy="879" r="12" fill="url(#gedge)"/>
<path d="M79 867.8 C85 869.5 87.5 875 86.5 880.5 C85.5 884 81.5 884.5 78.5 882.5 C81.5 879.5 81 872.5 75.5 870.5Z" fill="#55d878"/>
<path d="M65.5 882 C65 875 72 872.5 77 875.5 C72.5 876 69.5 880 71 884.5 C72.5 889 79 890.5 85 886.5 C80 892.5 68.5 891.5 65.5 882Z" fill="#0d4a96"/>
<ellipse cx="76" cy="880.5" rx="3.2" ry="3" fill="#0a3a78"/>
<!-- explorer -->
<path d="M113 870.5H120.5L122.5 872.5H135V876H113Z" fill="#e8a410"/>
<rect x="113" y="874" width="22" height="14" fill="#fcd462"/>
<path d="M117.5 888V880.5H130.5V888H127V884H121V888Z" fill="#3a9ae8"/>
<!-- yandex -->
<rect x="153" y="860" width="38" height="40" fill="#3c7350"/>
<circle cx="173" cy="880" r="12" fill="#fff"/>
<path d="M167 872L173 881V888M179 872L173 881" stroke="#f01010" stroke-width="2.6" fill="none"/>
<path d="M192.5 860V900" stroke="#3a4a50"/>
<!-- winrar -->
<rect x="210" y="869" width="24" height="7" rx="1.5" fill="#c0204a"/><rect x="210" y="876.5" width="24" height="7" rx="1.5" fill="#4a44b8"/><rect x="210" y="884" width="24" height="7" rx="1.5" fill="#1a8a3a"/>
<rect x="212" y="869.5" width="1.5" height="21" fill="#f0c020"/>
<rect x="218.5" y="868" width="8" height="23" fill="#d88a30"/><rect x="219.5" y="868" width="6" height="4" fill="#f0b040"/><rect x="219.5" y="879" width="6" height="5" fill="#fff"/><rect x="221" y="880.5" width="3" height="3" fill="#c07020"/>
<!-- basis -->
<rect x="259" y="868" width="24" height="24" rx="2" fill="#1e90f0"/>
<path d="M270 876.5H265Q262 876.5 262 878.2Q262 880 265 880H268Q271 880 271 882Q271 883.8 268 883.8H262 M281 876.5H276Q273 876.5 273 878.2Q273 880 276 880H279Q282 880 282 882Q282 883.8 279 883.8H273 M271.8 875.5V885" stroke="#fff" stroke-width="1.9" fill="none"/>
<!-- vray -->
<rect x="296" y="860" width="45" height="40" fill="#4b5a62"/><rect x="341" y="860" width="3" height="40" fill="#3a464e"/>
<rect x="308" y="868" width="24" height="24" fill="#2c56b8"/>
<circle cx="320" cy="880" r="8" fill="#fff"/><path d="M311.5 872L316 871.5L314.8 877Z" fill="#2c56b8"/><path d="M314.2 874 C315.8 877 317 884.5 318.6 884.6 C320.5 884.7 322 876.5 325.5 873.6" stroke="#2c56b8" stroke-width="1.7" fill="none"/>
<path d="M342.5 860V900" stroke="#56646e"/>
<!-- underlines -->
<rect x="104" y="898" width="41" height="2" fill="#76b9ed"/>
<rect x="153" y="898" width="40" height="2" fill="#3ad63a"/>
<rect x="202" y="898" width="41" height="2" fill="#76b9ed"/>
<rect x="251" y="898" width="41" height="2" fill="#76b9ed"/>
<rect x="296" y="898" width="48" height="2" fill="#76b9ed"/>
<!-- tray -->
<path d="M1354 884L1359.5 878.5L1365 884" stroke="#fff" stroke-width="1.3" fill="none"/>
<g stroke="#fff" stroke-width="1.2" fill="none"><rect x="1381.5" y="877.5" width="12" height="7"/><path d="M1393.5 879.5h1.5v3h-1.5 M1377 875v5M1379.5 875v5M1376 880h5"/></g>
<g stroke="#fff" stroke-width="1.2" fill="none"><path d="M1401 877h3l4-4v13l-4-4h-3z M1410.5 877.5c1 1 1 3 0 4 M1413 875.5c2 2 2 6 0 8 M1415.5 873.5c3 3 3 9 0 12"/></g>
<g stroke="#fff" stroke-width="1.2" fill="none"><path d="M1428 886a13 13 0 0 1 13 -13 M1431 886a10 10 0 0 1 10 -10 M1434 886a7 7 0 0 1 7 -7 M1437 886a4 4 0 0 1 4 -4"/></g>
<path d="M1559.5 872.5H1575.5V884.5H1569.5L1567.5 887L1565.5 884.5H1559.5Z" stroke="#fff" stroke-width="1.2" fill="none"/>
</svg>
<div class="t" style="left:38px;top:781px;font-size:11.6px">Модель_NEW_с фрезеровкой</div>
<div class="t" style="left:63px;top:839px;font-size:12.9px">ДСП бук</div>
<div class="t" style="left:1402px;top:651px;font-size:11px">Библиотека ящиков</div>
<div class="t" style="left:1402px;top:676px;font-size:11px">Изображение крепежа</div>
<div class="t" style="left:1402px;top:701px;font-size:11px">Модели</div>
<div class="t" style="left:1402px;top:726px;font-size:11px">Стекло, Метал</div>
<div class="t" style="left:1402px;top:751px;font-size:11px">Учебная база материалов</div>
<div class="t" style="left:1452px;top:874px;font-size:11px;color:#fff">РУС</div>
<div class="t" style="left:1501px;top:866px;font-size:10.8px;color:#fff">10:38</div>
<div class="t" style="left:1487px;top:882px;font-size:11px;color:#fff">23.01.2024</div>

<!-- ============ V-Ray Frame Buffer ============ -->
<div class="a" style="left:385px;top:13px;width:1175px;height:643px;box-shadow:0 2px 14px 2px rgba(0,0,0,0.30)"></div>
<svg width="1604" height="900" style="left:0;top:0" viewBox="0 0 1604 900">
<defs>
  <symbol id="eye" viewBox="0 0 14 10"><path d="M1 5C3 1.5 11 1.5 13 5C11 8.5 3 8.5 1 5Z" fill="none" stroke="currentColor" stroke-width="1.2"/><circle cx="7" cy="5" r="2" fill="currentColor"/></symbol>
  <symbol id="eyeoff" viewBox="0 0 14 10"><path d="M1 5C3 1.5 11 1.5 13 5C11 8.5 3 8.5 1 5Z M3 9L11 1" fill="none" stroke="currentColor" stroke-width="1.1"/></symbol>
  <symbol id="stack" viewBox="0 0 24 14"><path d="M3 3L1 5L6 10H21L23 8L19 4" fill="none" stroke="currentColor" stroke-width="1.5"/><path d="M1 8L6 13H21L23 11" fill="none" stroke="currentColor" stroke-width="1.5"/></symbol>
</defs>
<rect x="385.5" y="12.5" width="1174" height="642" fill="#3c3c3c" stroke="#6a6a6a"/>
<rect x="386" y="13" width="1173" height="30" fill="#fff"/>
<!-- title icon -->
<rect x="394" y="19" width="16" height="16" fill="#2c56b8"/>
<g transform="translate(394,19) scale(0.6667) translate(-308,-868)"><circle cx="320" cy="880" r="8" fill="#fff"/><path d="M311.5 872L316 871.5L314.8 877Z" fill="#2c56b8"/><path d="M314.2 874 C315.8 877 317 884.5 318.6 884.6 C320.5 884.7 322 876.5 325.5 873.6" stroke="#2c56b8" stroke-width="1.7" fill="none"/></g>
<!-- title controls -->
<path d="M1440 27.5H1450" stroke="#000" stroke-width="1"/>
<rect x="1485.5" y="22.5" width="10" height="10" fill="none" stroke="#000" stroke-width="1"/>
<path d="M1531 22L1541 32M1541 22L1531 32" stroke="#000" stroke-width="1.1"/>

<!-- left dock -->
<rect x="392" y="46" width="49" height="21" fill="#303030"/>
<rect x="441" y="46" width="94" height="21" fill="#404040"/>
<rect x="392" y="67" width="143" height="583" fill="#303030"/>
<g color="#5a5a5a" stroke="#5a5a5a" fill="none" stroke-width="1.5">
 <path d="M406 80H403.5V94.5H422.5V80H420 M413 81V90 M408.5 85.5H417.5 M403.5 97.5H422.5"/>
 <path d="M438.5 80V97 M448.5 79V98 M458.5 80V97"/>
 <path d="M473.5 80V94.5H492.5V80H486 M478 85L482 89L489 80 M473.5 97.5H492.5"/>
</g>
<text x="440" y="93" font-size="7" font-weight="bold" fill="#5a5a5a" font-family="Liberation Sans">A</text>
<text x="450" y="93" font-size="7" font-weight="bold" fill="#5a5a5a" font-family="Liberation Sans">B</text>
<path d="M451 96H459L455 100Z" fill="#9a9a9a"/>
<path d="M524 88h1M526.5 88h1" stroke="#6a6a6a"/>
<rect x="395.5" y="107.5" width="136" height="17" rx="2.5" fill="#3a3a3a" stroke="#141414"/>
<path d="M514.5 109V123" stroke="#333"/>
<circle cx="504" cy="115" r="3.8" fill="none" stroke="#ddd" stroke-width="1.3"/><path d="M506.8 117.8L510 121" stroke="#ddd" stroke-width="1.6"/>
<path d="M520 114H526L523 117Z" fill="#5aa7d8"/>
<!-- history scrollbar -->
<rect x="526" y="126" width="6" height="10" rx="2" fill="#888"/>
<path d="M527 133H531L529 130.5Z" fill="#1a1a1a"/>
<rect x="524.5" y="126" width="1" height="520" fill="#242424"/>
<rect x="526" y="138" width="6" height="491" rx="2" fill="#858585"/>
<rect x="526" y="632" width="6" height="12" rx="2" fill="#888"/>
<path d="M527 637H531L529 640Z" fill="#1a1a1a"/>

<!-- splitters -->
<rect x="535" y="43" width="6" height="611" fill="#3f3f3f"/>
<rect x="541" y="43" width="2.5" height="611" fill="#2a2a2a"/>
<rect x="543.5" y="43" width="1.5" height="611" fill="#3c3c3c"/>
<rect x="542" y="334" width="4" height="28" fill="#555"/><path d="M542 334.5h4M542 336.5h4M542 338.5h4M542 340.5h4M542 342.5h4M542 344.5h4M542 346.5h4M542 348.5h4M542 350.5h4M542 352.5h4M542 354.5h4M542 356.5h4M542 358.5h4M542 360.5h4" stroke="#8e8e8e" stroke-width="1" stroke-dasharray="1 1"/>
<!-- main pane -->
<rect x="545" y="43" width="749" height="611" fill="#303030"/>
<rect x="547" y="67" width="745" height="1" fill="#0a0a0a"/>
<rect x="548.5" y="76.5" width="180" height="19" rx="3" fill="#3d3d3d" stroke="#0e0e0e"/>
<path d="M715 84H722L718.5 88Z" fill="#5aa7d8"/>
<rect x="730" y="70" width="33" height="33" rx="2" fill="#3a474f"/>
<rect x="765" y="70" width="33" height="33" rx="2" fill="#3a474f"/>
<rect x="800" y="70" width="33" height="33" rx="2" fill="#3a474f"/>
<circle cx="746.5" cy="86" r="7" fill="#ff7b7b"/>
<circle cx="781.5" cy="86" r="7" fill="#77dd77"/>
<circle cx="816.5" cy="86" r="7" fill="#7fd4ff"/>
<circle cx="851" cy="86" r="7" fill="#fff"/>
<path d="M851 79A7 7 0 0 0 844 86H851Z M851 93A7 7 0 0 0 858 86H851Z" fill="#8e8e8e"/>
<!-- right toolbar icons -->
<g fill="none" stroke="#d8d8d8" stroke-width="1.6">
 <path d="M1110 77H1126L1131 82V96H1110Z M1114 77V83H1125V77 M1114 96V88H1127V96"/>
 <path d="M1145 77H1157L1163 83V96H1145Z M1157 77V83H1163"/>
 <rect x="1213.5" y="76" width="20" height="20"/>
</g>
<path d="M1127 96H1135L1131 100Z" fill="#d8d8d8"/>
<path d="M1150 83L1158 91M1158 83L1150 91" stroke="#ff6a6a" stroke-width="2"/>
<g fill="#5ab8f0"><rect x="1179" y="76" width="2" height="2"/><rect x="1183" y="76" width="2" height="2"/><rect x="1187" y="76" width="2" height="2"/><rect x="1191" y="76" width="2" height="2"/><rect x="1195" y="76" width="2" height="2"/><rect x="1179" y="80" width="2" height="2"/><rect x="1179" y="84" width="2" height="2"/><rect x="1179" y="88" width="2" height="2"/><rect x="1179" y="92" width="2" height="2"/><rect x="1179" y="96" width="2" height="2"/><rect x="1187" y="80" width="2" height="2"/><rect x="1183" y="84" width="2" height="2"/><rect x="1195" y="80" width="2" height="2"/></g>
<path d="M1188 85L1199 91L1194 92L1197 97L1195 98L1192 93L1189 96Z" fill="#fff"/>
<rect x="1218.5" y="84.5" width="11" height="7" fill="none" stroke="#5ab8f0" stroke-width="1.6"/>
<g fill="none" stroke="#5e5e5e" stroke-width="1.6"><path d="M1252 84C1252 93 1256 96 1262 96C1268 96 1272 93 1272 84Z M1257 84C1257 80 1267 80 1267 84 M1272 87C1276 86 1276 91 1271 92 M1252 87L1249 84"/></g>
<rect x="1264" y="89" width="8" height="7" fill="#5e5e5e"/>
<!-- VFB image frame -->
<rect x="585" y="230" width="668" height="267" fill="#1e1e1e"/>
<rect x="586" y="231" width="666" height="265" fill="#fff"/>
<!-- status bar -->
<g fill="none" stroke="#d8d8d8" stroke-width="1.3"><path d="M557 631V645H571 M557 645L554 648"/></g>
<path d="M557 642L560 645L557 648L554 645Z" fill="#fff"/>
<rect x="561" y="635" width="8" height="6" fill="#e8e8e8"/><path d="M562.5 635V633C562.5 630 567.5 630 567.5 633V635" stroke="#e8e8e8" stroke-width="1.3" fill="none"/>
<path d="M658.5 625V652 M710.5 625V652 M923.5 625V652 M1100.5 625V652" stroke="#5a5a5a"/>
<rect x="664.5" y="629.5" width="38" height="17" rx="3" fill="#3d3d3d" stroke="#0e0e0e"/>
<path d="M690 635H697L693.5 639Z" fill="#5aa7d8"/>
<g fill="none" stroke="#c8c8c8" stroke-width="1.3"><path d="M723 631V645H737 M723 645C724 636 729 633 735 633"/></g>
<path d="M723 642L726 645L723 648L720 645Z" fill="#fff"/>
<rect x="776" y="632" width="13" height="13" rx="2" fill="#8a8a8a"/>
<rect x="929.5" y="629.5" width="45" height="17" rx="3" fill="#3d3d3d" stroke="#0e0e0e"/>
<path d="M961 635H968L964.5 639Z" fill="#5aa7d8"/>
<rect x="1270.5" y="630.5" width="15" height="15" fill="none" stroke="#5a5a5a"/>
<path d="M1272 633.5H1284 M1272 638.5H1279 M1272 642.5H1283" stroke="#eee" stroke-width="1.6"/>
<path d="M1272 633.5H1284" stroke="#5ab8f0" stroke-width="1.6"/>

<!-- right splitter -->
<rect x="1294" y="43" width="2" height="611" fill="#3d3d3d"/>
<rect x="1296" y="43" width="2" height="611" fill="#2c2c2c"/>
<rect x="1298" y="43" width="6" height="611" fill="#3f3f3f"/>
<rect x="1293" y="334" width="4" height="28" fill="#555"/><path d="M1293 334.5h4M1293 336.5h4M1293 338.5h4M1293 340.5h4M1293 342.5h4M1293 344.5h4M1293 346.5h4M1293 348.5h4M1293 350.5h4M1293 352.5h4M1293 354.5h4M1293 356.5h4M1293 358.5h4M1293 360.5h4" stroke="#8e8e8e" stroke-width="1" stroke-dasharray="1 1"/>
<!-- layers dock -->
<rect x="1304" y="46" width="46" height="21" fill="#303030"/>
<rect x="1350" y="46" width="2" height="21" fill="#3c3c3c"/>
<rect x="1352" y="46" width="39" height="21" fill="#303030"/>
<rect x="1391" y="46" width="3" height="21" fill="#3c3c3c"/>
<rect x="1394" y="46" width="28" height="21" fill="#303030"/>
<rect x="1422" y="46" width="131" height="21" fill="#404040"/>
<rect x="1304" y="67" width="249" height="583" fill="#303030"/>
<!-- layers toolbar -->
<use href="#stack" x="1313" y="82" width="24" height="14" color="#e8e8e8"/>
<path d="M1324 79V89M1319 84H1329" stroke="#5ed65e" stroke-width="2.2"/>
<path d="M1330 95H1339L1334.5 100Z" fill="#c8c8c8"/>
<use href="#stack" x="1348" y="82" width="24" height="14" color="#777"/>
<path d="M1356 78L1362 84M1362 78L1356 84" stroke="#888" stroke-width="1.8"/>
<use href="#stack" x="1383" y="82" width="24" height="14" color="#eee"/>
<path d="M1390 77H1399L1401 79V86H1390Z" fill="#5ab8f0"/><rect x="1393" y="77" width="4" height="3" fill="#303030"/><rect x="1392" y="82" width="7" height="4" fill="#303030"/>
<use href="#stack" x="1418" y="82" width="24" height="14" color="#eee"/>
<path d="M1424 78H1429L1430 79.5H1434V86H1424Z" fill="#5ab8f0"/><path d="M1426 82H1438L1435 86H1424Z" fill="#3a8ab8"/>
<g fill="#fff"><circle cx="1455" cy="81" r="1.5"/><circle cx="1455" cy="89" r="1.5"/><circle cx="1455" cy="97" r="1.5"/></g>
<circle cx="1455" cy="89" r="1.5" fill="#5ab8f0"/>
<path d="M1459 81H1474 M1459 97H1470" stroke="#fff" stroke-width="1.6"/><path d="M1459 89H1474" stroke="#5ab8f0" stroke-width="1.6"/>
<path d="M1469 96H1478L1473.5 101Z" fill="#c8c8c8"/>
<path d="M1493 89C1495 82 1505 82 1506 90" fill="none" stroke="#fff" stroke-width="1.8"/><path d="M1490 84L1491 92L1498 89Z" fill="#fff"/>
<path d="M1537 89C1535 82 1525 82 1524 90" fill="none" stroke="#666" stroke-width="1.8"/><path d="M1540 84L1539 92L1532 89Z" fill="#666"/>
<!-- layer rows -->
<g fill="#393939">
 <rect x="1307" y="105" width="241" height="18"/>
 <rect x="1307" y="124" width="241" height="18"/>
 <rect x="1307" y="143" width="241" height="18"/>
 <rect x="1307" y="162" width="241" height="18"/>
 <rect x="1307" y="181" width="241" height="18"/>
 <rect x="1307" y="200" width="241" height="18"/>
</g>
<use href="#eyeoff" x="1311" y="109" width="14" height="10" color="#555"/>
<use href="#eye" x="1311" y="128" width="14" height="10" color="#d8d8d8"/>
<use href="#eyeoff" x="1311" y="147" width="14" height="10" color="#555"/>
<use href="#eyeoff" x="1311" y="166" width="14" height="10" color="#555"/>
<use href="#eyeoff" x="1311" y="185" width="14" height="10" color="#555"/>
<use href="#eye" x="1311" y="204" width="14" height="10" color="#d8d8d8"/>
<rect x="1349.5" y="106.5" width="15" height="15" fill="none" stroke="#5a5a5a"/>
<path d="M1352 117.5H1362" stroke="#5a5a5a" stroke-width="2"/><path d="M1353 111v3" stroke="#5a5a5a"/>
<rect x="1349.5" y="125.5" width="15" height="15" fill="none" stroke="#e0e0e0"/>
<path d="M1351 140C1352 132 1356 128 1363 127" fill="none" stroke="#e0e0e0" stroke-width="1.2"/>
<rect x="1369.5" y="144.5" width="15" height="15" fill="none" stroke="#5a5a5a"/><path d="M1377 147V157M1372 152H1382" stroke="#5a5a5a"/>
<rect x="1369.5" y="163.5" width="15" height="15" fill="none" stroke="#5a5a5a"/><path d="M1372 177L1376 171L1378 177Z" fill="#5a5a5a"/>
<rect x="1369.5" y="182.5" width="15" height="15" fill="none" stroke="#5a5a5a"/><path d="M1377 184V196" stroke="#5a5a5a"/><path d="M1377 185A5 5 0 0 1 1377 195Z" fill="#5a5a5a"/>
<rect x="1369.5" y="201.5" width="15" height="15" fill="#3a3a3a" stroke="#5ab8f0"/>
<circle cx="1377" cy="206.5" r="3.3" fill="#6ab8ff"/><circle cx="1374" cy="211" r="3.3" fill="#ff6a5a"/><circle cx="1380" cy="211" r="3.3" fill="#6ad46a"/>
<!-- properties -->
<rect x="1307" y="377" width="243" height="2" fill="#3e3e3e"/>
<path d="M1414 376.5h28M1414 379h28" stroke="#888" stroke-dasharray="1 1"/>
<rect x="1374" y="381" width="176" height="21" fill="#404040"/>
</svg>
<div class="t" style="left:415px;top:22px;font-size:11.5px">V-Ray Frame Buffer - [50.0% of 1333 x 530]</div>
<div class="t" style="left:396px;top:52px;font-size:12px;font-weight:bold;color:#58a8dc">History</div>
<div class="t" style="left:399px;top:112px;font-size:10.8px;color:#888">Search filter</div>
<div class="t" style="left:553px;top:50px;font-size:12px;color:#d8d8d8">File</div>
<div class="t" style="left:583px;top:50px;font-size:12px;color:#d8d8d8">Render</div>
<div class="t" style="left:632px;top:50px;font-size:12px;color:#d8d8d8">Image</div>
<div class="t" style="left:678px;top:50px;font-size:12px;color:#d8d8d8">View</div>
<div class="t" style="left:714px;top:50px;font-size:12px;color:#d8d8d8">Options</div>
<div class="t" style="left:552px;top:82px;font-size:10px;color:#dcdcdc">RGB color</div>
<div class="t" style="left:581px;top:634px;font-size:11.5px;font-weight:bold;color:#9a9a9a">[0, 0]</div>
<div class="t" style="left:669px;top:634px;font-size:11px;color:#d8d8d8">1x1</div>
<div class="t" style="left:747px;top:634px;font-size:11.5px;font-weight:bold;color:#8a8a8a">Raw</div>
<div class="t" style="left:798px;top:634px;font-size:11px;color:#8a8a8a">0.000</div>
<div class="t" style="left:841px;top:634px;font-size:11px;color:#8a8a8a">0.000</div>
<div class="t" style="left:884px;top:634px;font-size:11px;color:#8a8a8a">0.000</div>
<div class="t" style="left:933px;top:634px;font-size:11px;color:#d0d0d0">HSV</div>
<div class="t" style="left:993px;top:634px;font-size:11px;color:#8a8a8a">0</div>
<div class="t" style="left:1028px;top:634px;font-size:11px;color:#8a8a8a">0.0</div>
<div class="t" style="left:1067px;top:634px;font-size:11px;color:#8a8a8a">0.0</div>
<div class="t" style="left:1114px;top:634px;font-size:11px;color:#7a7a7a">Finished in [00:00:12.7] [00</div>
<div class="t" style="left:1308px;top:52px;font-size:12px;font-weight:bold;color:#58a8dc">Layers</div>
<div class="t" style="left:1356px;top:52px;font-size:12.4px;font-weight:bold;color:#dcdcdc">Stats</div>
<div class="t" style="left:1398px;top:52px;font-size:12.4px;font-weight:bold;color:#dcdcdc">Log</div>
<div class="t" style="left:1371px;top:109px;font-size:11.5px;color:#7a7a7a">Stamp</div>
<div class="t" style="left:1371px;top:128px;font-size:11.8px;color:#e0e0e0">Display Correction</div>
<div class="t" style="left:1391px;top:147px;font-size:11.6px;color:#7a7a7a">Lens Effects</div>
<div class="t" style="left:1391px;top:166px;font-size:11.6px;color:#7a7a7a">Sharpen/Blur</div>
<div class="t" style="left:1391px;top:185px;font-size:11.6px;color:#7a7a7a">Denoiser: unavailable</div>
<div class="t" style="left:1391px;top:204px;font-size:11.8px;color:#e0e0e0">Source: RGB</div>
<div class="t" style="left:1311px;top:387px;font-size:12px;font-weight:bold;color:#58a8dc">Properties</div>

<svg width="1604" height="900" style="left:0;top:0" viewBox="0 0 1604 900">
<defs>
 <linearGradient id="gback" x1="0" y1="0" x2="1" y2="0">
  <stop offset="0" stop-color="#a0521e"/><stop offset="0.15" stop-color="#b86630"/><stop offset="0.3" stop-color="#ad5a26"/><stop offset="0.5" stop-color="#bf7036"/><stop offset="0.7" stop-color="#ae5c28"/><stop offset="0.85" stop-color="#bb6a32"/><stop offset="1" stop-color="#a85824"/>
 </linearGradient>
 <linearGradient id="gside" x1="0" y1="0" x2="1" y2="0"><stop offset="0" stop-color="#d8d8d8"/><stop offset="1" stop-color="#e8e8e8"/></linearGradient>
 <linearGradient id="gniche" x1="0" y1="0" x2="1" y2="0"><stop offset="0" stop-color="#ece9e6"/><stop offset="1" stop-color="#cfcac6"/></linearGradient>
</defs>
<g stroke-linejoin="round">
<!-- left tall cabinet -->
<path d="M737 268L734 258L758 251L761 259L795 264V465L737 461Z" fill="#e1e1e1"/>
<path d="M734 258L758 251L761 259L795 264L795 268L737 268Z" fill="#f4f4f4" stroke="#c4c4c4" stroke-width="0.8"/>
<path d="M736 264L795 266V271L736 269Z" fill="#d6d6d6"/><path d="M737 271H795" stroke="#c8c8c8"/>
<rect x="742" y="270" width="47" height="72" fill="#e4e4e4" stroke="#c4c4c4" stroke-width="0.8"/>
<rect x="749" y="280" width="33" height="54" fill="#e1e1e1" stroke="#c0c0c0" stroke-width="0.8"/>
<rect x="742" y="344" width="47" height="50" fill="#e4e4e4" stroke="#c4c4c4" stroke-width="0.8"/>
<rect x="749" y="352" width="33" height="36" fill="#e1e1e1" stroke="#c0c0c0" stroke-width="0.8"/>
<rect x="742" y="395" width="47" height="14" fill="#e4e4e4" stroke="#c4c4c4" stroke-width="0.8"/>
<rect x="742" y="411" width="47" height="14" fill="#e4e4e4" stroke="#c4c4c4" stroke-width="0.8"/>
<rect x="742" y="427" width="47" height="29" fill="#e4e4e4" stroke="#c4c4c4" stroke-width="0.8"/>
<rect x="749" y="433" width="33" height="17" fill="#e1e1e1" stroke="#c0c0c0" stroke-width="0.8"/>
<path d="M737 268V461 M790 268V465" stroke="#d8d8d8" stroke-width="1.5"/>
<path d="M786 336V344 M786 346V354 M761 404H770 M761 419H770 M761 441H770" stroke="#9a9a9a" stroke-width="1.2"/>
<path d="M738 458L795 462V466L738 462Z" fill="#e0e0e0"/>
<!-- niche left wall -->
<path d="M795 264L816 260V344L816 390L795 393Z" fill="url(#gniche)"/>
<!-- backsplash -->
<path d="M816 344L877 348L887 343.5L938 346.5L946 352L1012.5 360V407L816 390Z" fill="url(#gback)"/>
<g stroke="#a35520" stroke-width="0.6" opacity="0.5"><path d="M830 346V391M851 347V392M872 348V393M900 345V394M925 346V395M960 354V396M985 357V397"/></g>
<!-- upper left wall unit -->
<path d="M803 260L871 266V348L803 343Z" fill="#e1e1e1" stroke="#c8c8c8" stroke-width="0.8"/>
<path d="M795.5 263L804 260.5V343L795.5 342Z" fill="#cfcfcf"/>
<path d="M803 272L837 274V344L803 342Z M837 274L871 277V347L837 344Z" fill="#e5e5e5" stroke="#c4c4c4" stroke-width="0.8"/>
<path d="M810 281L831 282V335L810 334Z M843 283L864 285V338L843 336Z" fill="#e1e1e1" stroke="#c2c2c2" stroke-width="0.7"/>
<path d="M834 333V342 M840 334V343" stroke="#999" stroke-width="1.2"/>
<!-- hood unit -->
<path d="M871 266L953 272V356L946 352L938 346.5L887 343.5L877 348L871 348Z" fill="#e1e1e1"/>
<path d="M876 278L948 283V327L876 325Z" fill="#e4e4e4" stroke="#c4c4c4" stroke-width="0.8"/>
<path d="M885 291L940 294V322L885 320Z" fill="#e1e1e1" stroke="#c2c2c2" stroke-width="0.7"/>
<path d="M873 326L950 330V344L873 341Z" fill="#f2f2f2" stroke="#c8c8c8" stroke-width="0.8"/>
<path d="M876 340L887 343.5L938 346.5L949 344" fill="none" stroke="#c2c2c2"/>
<path d="M897 334H905 M932 336H940 M908 327H916" stroke="#777" stroke-width="1.3"/>
<!-- upper right wall unit -->
<path d="M953 272L1024 279V282L1012.5 283V360L953 356Z" fill="#e1e1e1" stroke="#c8c8c8" stroke-width="0.8"/>
<path d="M954 285L989 287V357L954 355Z M989 287L1012 289V359L989 357Z" fill="#e5e5e5" stroke="#c4c4c4" stroke-width="0.8"/>
<path d="M961 293L982 294V349L961 348Z M995 295L1008 296V351L995 350Z" fill="#e1e1e1" stroke="#c2c2c2" stroke-width="0.7"/>
<path d="M985 346V356 M991 347V357" stroke="#999" stroke-width="1.2"/>
<path d="M803 260L816 258L1024 279" fill="none" stroke="#dedede"/>
<!-- countertop -->
<path d="M795 392L816 389L1012.5 406V413L795 395Z" fill="#d38a48"/>
<path d="M795 395L1012.5 413V417.5L795 399.5Z" fill="#c06c30"/>
<!-- lower cabinets -->
<path d="M795 399.5L1012.5 417.5V485.5L795 466Z" fill="#e6e6e6"/>
<path d="M796 401L829 404V461L796 458Z M829 404L863 407V464L829 461Z" fill="#e4e4e4" stroke="#c6c6c6" stroke-width="0.8"/>
<path d="M803 411L822 413V452L803 450Z M836 414L856 416V455L836 453Z" fill="#e1e1e1" stroke="#c2c2c2" stroke-width="0.7"/>
<path d="M863 407L870 407.6V465L863 464.4Z" fill="#dadada"/>
<path d="M870 408L927 413V436.6L870 431.8Z M870 432.6L927 437.4V469.6L870 464.6Z" fill="#e4e4e4" stroke="#c6c6c6" stroke-width="0.8"/>
<path d="M888 415L919 418V430L888 427Z M888 441L919 444V462L888 459Z" fill="#e1e1e1" stroke="#c2c2c2" stroke-width="0.7"/>
<path d="M927 413L937 414V471L927 470Z" fill="#dadada"/>
<path d="M937 414L979 418V476L937 472Z M979 418L1012 421V479L979 476Z" fill="#e4e4e4" stroke="#c6c6c6" stroke-width="0.8"/>
<path d="M944 423L968 425V466L944 464Z M986 427L1006 429V470L986 468Z" fill="#e1e1e1" stroke="#c2c2c2" stroke-width="0.7"/>
<path d="M826 403V413 M830 403V413 M898 423.5H909 M898 453.5H909 M975 416V427 M979.5 416V427" stroke="#9a9a9a" stroke-width="1.2"/>
<path d="M874.5 413Q872.5 417.5 874.5 422 M932 417Q930 421.5 932 426" fill="none" stroke="#9a9a9a" stroke-width="1.1"/>
<path d="M795 466L1012.5 485.5V478.5L795 460Z" fill="#dcdcdc"/>
<!-- right tall cabinet -->
<path d="M1011 283L1100 282L1100 485L1072 492L1012.5 486Z" fill="#e1e1e1"/>
<path d="M1072 294L1100 283V485L1072 492Z" fill="url(#gside)"/>
<path d="M1011 283L1100 282L1079 288L1072 294L1012 291Z" fill="#f2f2f2" stroke="#c8c8c8" stroke-width="0.8"/>
<path d="M1019 295L1046 297V417L1019 415Z M1046 297L1072 299V419L1046 417Z" fill="#e5e5e5" stroke="#c4c4c4" stroke-width="0.8"/>
<path d="M1025.8 301.4L1039 302.5V412.5L1025.8 411.5Z" fill="#4c0a0e"/>
<path d="M1052.2 304L1065.3 305V414L1052.2 413Z" fill="#4c0a0e"/>
<path d="M1026 332L1039 333 M1026 367L1039 368 M1052 334L1065 335 M1052 369L1065 370" stroke="#8a2a2a" stroke-width="0.8"/>
<path d="M1019 419L1046 421V480L1019 478Z M1046 421L1072 423V482L1046 480Z" fill="#e4e4e4" stroke="#c4c4c4" stroke-width="0.8"/>
<path d="M1027 428L1040 429V470L1027 469Z M1052 430L1066 431V472L1052 471Z" fill="#e1e1e1" stroke="#c2c2c2" stroke-width="0.7"/>
<path d="M1042 408V418 M1046 408V418 M1042 423V433 M1046 423V433" stroke="#999" stroke-width="1.2"/>
<path d="M1012.5 291V486 M1072 294V492" stroke="#d6d6d6"/>
</g>
</svg>

</body></html>
